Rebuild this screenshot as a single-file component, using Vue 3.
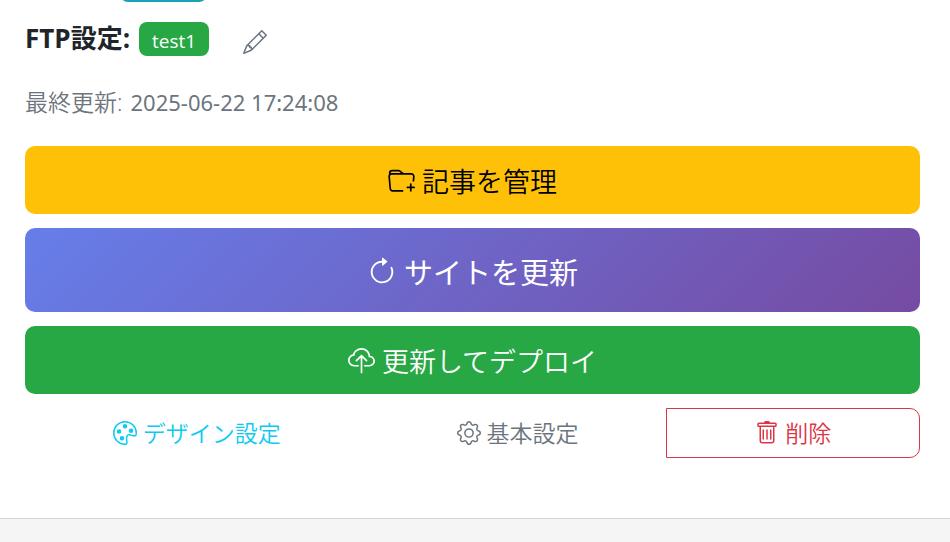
<script setup>
import { h } from 'vue'

const paths = {
  pencil: [
    'M12.146.146a.5.5 0 0 1 .708 0l3 3a.5.5 0 0 1 0 .708l-10 10a.5.5 0 0 1-.168.11l-5 2a.5.5 0 0 1-.65-.65l2-5a.5.5 0 0 1 .11-.168zM11.207 2.5 13.5 4.793 14.793 3.5 12.5 1.207zm1.586 3L10.5 3.207 4 9.707V10h.5a.5.5 0 0 1 .5.5v.5h.5a.5.5 0 0 1 .5.5v.5h.293zm-9.761 5.175-.106.106-1.528 3.821 3.821-1.528.106-.106A.5.5 0 0 1 5 12.5V12h-.5a.5.5 0 0 1-.5-.5V11h-.5a.5.5 0 0 1-.468-.325',
  ],
  folder: [
    'm.5 3 .04.87a2 2 0 0 0-.342 1.311l.637 7A2 2 0 0 0 2.826 14H9v-1H2.826a1 1 0 0 1-.995-.91l-.637-7A1 1 0 0 1 2.19 4h11.62a1 1 0 0 1 .996 1.09L14.54 8h1.005l.256-2.819A2 2 0 0 0 13.81 3H9.828a2 2 0 0 1-1.414-.586l-.828-.828A2 2 0 0 0 6.172 1H2.5a2 2 0 0 0-2 2m5.672-1a1 1 0 0 1 .707.293L7.586 3H2.19q-.362.002-.683.12L1.5 2.98a1 1 0 0 1 1-.98z',
    'M13.5 9a.5.5 0 0 1 .5.5V11h1.5a.5.5 0 1 1 0 1H14v1.5a.5.5 0 1 1-1 0V12h-1.5a.5.5 0 0 1 0-1H13V9.5a.5.5 0 0 1 .5-.5',
  ],
  refresh: [
    'M8 3a5 5 0 1 0 4.546 2.914.5.5 0 0 1 .908-.417A6 6 0 1 1 8 2z',
    'M8 4.466V.534a.25.25 0 0 1 .41-.192l2.36 1.966c.12.1.12.284 0 .384L8.41 4.658A.25.25 0 0 1 8 4.466',
  ],
  upload: [
    'M4.406 1.342A5.53 5.53 0 0 1 8 0c2.69 0 4.923 2 5.166 4.579C14.758 4.804 16 6.137 16 7.773 16 9.569 14.502 11 12.687 11H10a.5.5 0 0 1 0-1h2.688C13.979 10 15 8.988 15 7.773c0-1.216-1.02-2.228-2.313-2.228h-.5v-.5C12.188 2.825 10.328 1 8 1a4.53 4.53 0 0 0-2.941 1.1c-.757.652-1.153 1.438-1.153 2.055v.448l-.445.049C2.064 4.805 1 5.952 1 7.318 1 8.785 2.23 10 3.781 10H6a.5.5 0 0 1 0 1H3.781C1.708 11 0 9.366 0 7.318c0-1.763 1.266-3.223 2.942-3.593.143-.863.698-1.723 1.464-2.383',
    'M7.646 4.146a.5.5 0 0 1 .708 0l3 3a.5.5 0 0 1-.708.708L8.5 5.707V14.5a.5.5 0 0 1-1 0V5.707L5.354 7.854a.5.5 0 1 1-.708-.708z',
  ],
  palette: [
    'M8 5a1.5 1.5 0 1 0 0-3 1.5 1.5 0 0 0 0 3m4 3a1.5 1.5 0 1 0 0-3 1.5 1.5 0 0 0 0 3M5.5 7a1.5 1.5 0 1 1-3 0 1.5 1.5 0 0 1 3 0m.5 6a1.5 1.5 0 1 0 0-3 1.5 1.5 0 0 0 0 3',
    'M16 8c0 3.15-1.866 2.585-3.567 2.07C11.42 9.763 10.465 9.473 10 10c-.603.683-.475 1.819-.351 2.92C9.826 14.495 9.996 16 8 16a8 8 0 1 1 8-8m-8 7c.611 0 .654-.171.655-.176.078-.146.124-.464.07-1.119-.014-.168-.037-.37-.061-.591-.052-.464-.112-1.005-.118-1.462-.01-.707.083-1.61.704-2.314.369-.417.845-.578 1.272-.618.404-.038.812.026 1.16.104.343.077.702.186 1.025.284l.028.008c.346.105.658.199.953.266.653.148.904.083.991.024C14.717 9.38 15 9.161 15 8a7 7 0 1 0-7 7',
  ],
  gear: [
    'M8 4.754a3.246 3.246 0 1 0 0 6.492 3.246 3.246 0 0 0 0-6.492M5.754 8a2.246 2.246 0 1 1 4.492 0 2.246 2.246 0 0 1-4.492 0',
    'M9.796 1.343c-.527-1.79-3.065-1.79-3.592 0l-.094.319a.873.873 0 0 1-1.255.52l-.292-.16c-1.64-.892-3.433.902-2.54 2.541l.159.292a.873.873 0 0 1-.52 1.255l-.319.094c-1.79.527-1.79 3.065 0 3.592l.319.094a.873.873 0 0 1 .52 1.255l-.16.292c-.892 1.64.901 3.434 2.541 2.54l.292-.159a.873.873 0 0 1 1.255.52l.094.319c.527 1.79 3.065 1.79 3.592 0l.094-.319a.873.873 0 0 1 1.255-.52l.292.16c1.64.893 3.434-.902 2.54-2.541l-.159-.292a.873.873 0 0 1 .52-1.255l.319-.094c1.79-.527 1.79-3.065 0-3.592l-.319-.094a.873.873 0 0 1-.52-1.255l.16-.292c.893-1.64-.902-3.433-2.541-2.54l-.292.159a.873.873 0 0 1-1.255-.52zm-2.633.283c.246-.835 1.428-.835 1.674 0l.094.319a1.873 1.873 0 0 0 2.693 1.115l.291-.16c.764-.415 1.6.42 1.184 1.185l-.159.292a1.873 1.873 0 0 0 1.116 2.692l.318.094c.835.246.835 1.428 0 1.674l-.319.094a1.873 1.873 0 0 0-1.115 2.693l.16.291c.415.764-.42 1.6-1.185 1.184l-.291-.159a1.873 1.873 0 0 0-2.693 1.116l-.094.318c-.246.835-1.428.835-1.674 0l-.094-.319a1.873 1.873 0 0 0-2.692-1.115l-.292.16c-.764.415-1.6-.42-1.184-1.185l.159-.291A1.873 1.873 0 0 0 1.945 8.93l-.319-.094c-.835-.246-.835-1.428 0-1.674l.319-.094A1.873 1.873 0 0 0 3.06 4.377l-.16-.292c-.415-.764.42-1.6 1.185-1.184l.292.159a1.873 1.873 0 0 0 2.692-1.115z',
  ],
  trash: [
    'M5.5 5.5A.5.5 0 0 1 6 6v6a.5.5 0 0 1-1 0V6a.5.5 0 0 1 .5-.5m2.5 0a.5.5 0 0 1 .5.5v6a.5.5 0 0 1-1 0V6a.5.5 0 0 1 .5-.5m3 .5a.5.5 0 0 0-1 0v6a.5.5 0 0 0 1 0z',
    'M14.5 3a1 1 0 0 1-1 1H13v9a2 2 0 0 1-2 2H5a2 2 0 0 1-2-2V4h-.5a1 1 0 0 1-1-1V2a1 1 0 0 1 1-1H6a1 1 0 0 1 1-1h2a1 1 0 0 1 1 1h3.5a1 1 0 0 1 1 1zM4.118 4 4 4.059V13a1 1 0 0 0 1 1h6a1 1 0 0 0 1-1V4.059L11.882 4zM2.5 3h11V2h-11z',
  ],
}

const Icon = (props) =>
  h(
    'svg',
    { viewBox: '0 0 16 16', fill: 'currentColor', 'aria-hidden': 'true' },
    paths[props.name].map((d) => h('path', { d })),
  )
Icon.props = ['name']
</script>

<template>
  <main class="card">
    <div class="status"><span class="status-badge"></span></div>
    <div class="ftp">
      <strong class="ftp-label">FTP設定:</strong>
      <span class="badge">test1</span>
      <button class="edit" type="button" aria-label="FTP設定を編集"><Icon class="icon" name="pencil" /></button>
    </div>
    <p class="updated"><span>最終更新:</span><time>2025-06-22 17:24:08</time></p>
    <div class="actions">
      <a class="btn manage" href="#"><Icon class="icon" name="folder" />記事を管理</a>
      <button class="btn update" type="button"><Icon class="icon" name="refresh" />サイトを更新</button>
      <button class="btn deploy" type="button"><Icon class="icon" name="upload" />更新してデプロイ</button>
      <div class="group">
        <a class="item design" href="#"><Icon class="icon" name="palette" />デザイン設定</a>
        <a class="item basic" href="#"><Icon class="icon" name="gear" />基本設定</a>
        <button class="item delete" type="button"><Icon class="icon" name="trash" />削除</button>
      </div>
    </div>
  </main>
  <footer class="footer"></footer>
</template>

<style>
body {
  margin: 0;
  background: #fff;
}
#app {
  display: flex;
  flex-direction: column;
  min-height: 100vh;
}
</style>

<style scoped>
.card {
  padding: 0 30px 60px 25px;
  color: #212529;
  font-family: "Open Sans", "Noto Sans CJK JP", sans-serif;
  font-size: 23px;
  font-weight: 350;
}
.card * {
  box-sizing: border-box;
}
.status {
  display: flex;
  align-items: flex-end;
  height: 2px;
  padding-left: 95px;
  overflow: hidden;
}
.status-badge {
  width: 87px;
  height: 34px;
  flex: none;
  border-radius: 8px;
  background: #17a2b8;
}
.ftp {
  display: flex;
  align-items: center;
  height: 34px;
  margin-top: 20px;
}
.ftp-label {
  font-size: 26px;
  font-weight: 700;
  line-height: 32px;
  padding-bottom: 2px;
}
.badge {
  margin-left: 9px;
  padding: 4px 13px 0;
  border-radius: 8px;
  background: #28a745;
  color: #fff;
  font-size: 19px;
  font-weight: 400;
  line-height: 30px;
}
.edit {
  display: flex;
  margin-left: 34px;
  padding: 5px 0 0;
  border: 0;
  background: none;
  color: #6c757d;
}
.icon {
  width: 24px;
  height: 24px;
  flex: none;
}
.updated {
  display: flex;
  align-items: baseline;
  gap: 8px;
  margin: 30px 0 27px;
  color: #6c757d;
  line-height: 33px;
}
time {
  font-family: "Noto Sans", "Open Sans", sans-serif;
  font-size: 22px;
  font-weight: 400;
}
.actions {
  display: flex;
  flex-direction: column;
  gap: 14px;
}
.btn,
.item {
  display: flex;
  align-items: center;
  justify-content: center;
  gap: 7px;
  border: 0;
  background: none;
  font: inherit;
  text-decoration: none;
}
.btn {
  height: 68px;
  border-radius: 10px;
  color: #fff;
  font-size: 27px;
}
.btn .icon {
  width: 27px;
  height: 27px;
}
.btn .icon,
.item .icon {
  margin-top: 2px;
}
.manage {
  background: #ffc107;
  color: #000;
}
.update {
  height: 84px;
  padding-top: 3px;
  background: linear-gradient(135deg, #667eea 0%, #764ba2 100%);
  font-size: 29px;
  font-weight: 400;
}
.update .icon {
  width: 30px;
  height: 30px;
}
.deploy {
  background: #28a745;
}
.group {
  display: flex;
}
.item {
  flex: 1 1 auto;
  height: 50px;
  gap: 6px;
  padding: 0 0 2px;
}
.design {
  color: #0dcaf0;
}
.basic {
  color: #6c757d;
}
.delete {
  border: 1px solid #dc3545;
  border-radius: 0 10px 10px 0;
  color: #dc3545;
}
.footer {
  flex: 1;
  border-top: 1px solid #d5d5d5;
  background: #f5f5f5;
}
</style>
